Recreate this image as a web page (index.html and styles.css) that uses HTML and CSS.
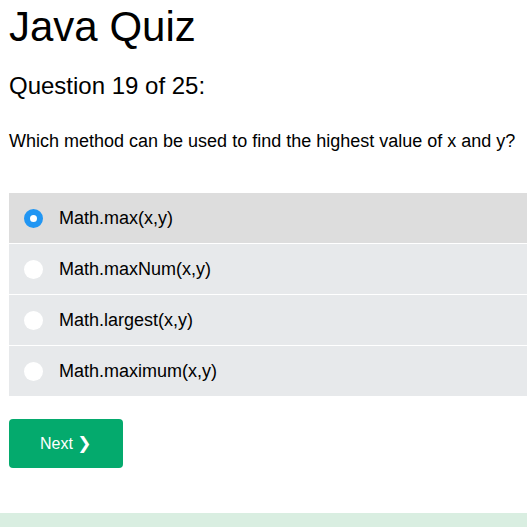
FILE: index.html
```html
<!DOCTYPE html>
<html lang="en">
<head>
<meta charset="utf-8">
<title>Java Quiz</title>
<link rel="stylesheet" href="styles.css">
</head>
<body>
<main class="quiz">
  <h1 class="quiz-title">Java Quiz</h1>
  <h3 class="quiz-counter">Question 19 of 25:</h3>
  <p class="quiz-question">Which method can be used to find the highest value of x and y?</p>
  <form class="options">
    <label class="option option-selected"><input type="radio" name="a" class="radio" checked><span>Math.max(x,y)</span></label>
    <label class="option"><input type="radio" name="a" class="radio"><span>Math.maxNum(x,y)</span></label>
    <label class="option"><input type="radio" name="a" class="radio"><span>Math.largest(x,y)</span></label>
    <label class="option"><input type="radio" name="a" class="radio"><span>Math.maximum(x,y)</span></label>
  </form>
  <button class="next-btn" type="button">Next <span class="chev">&#10095;</span></button>
</main>
<footer class="band"></footer>
</body>
</html>
```
FILE: styles.css
```css
html, body {
  margin: 0;
  padding: 0;
  background: #fff;
}
body {
  font-family: "Liberation Sans", Arial, sans-serif;
  color: #000;
  width: 527px;
  height: 527px;
  overflow: hidden;
  display: flex;
  flex-direction: column;
}
.quiz {
  padding: 3px 0 0 9px;
  flex: 1;
}
.quiz-title {
  margin: 0;
  font-size: 42px;
  line-height: 48px;
  font-weight: normal;
}
.quiz-counter {
  margin: 21px 0 0;
  font-size: 24px;
  line-height: 28px;
  font-weight: normal;
}
.quiz-question {
  margin: 31px 0 0;
  font-size: 18px;
  line-height: 21px;
}
.options {
  margin: 41px 0 0;
  display: flex;
  flex-direction: column;
}
.option {
  display: flex;
  align-items: center;
  gap: 16px;
  height: 51px;
  box-sizing: border-box;
  padding: 0 0 0 15px;
  border-bottom: 1px solid #fff;
  background: #e7e9eb;
  font-size: 18px;
  line-height: 21px;
}
.option-selected {
  background: #dddddd;
}
.radio {
  appearance: none;
  -webkit-appearance: none;
  margin: 0;
  width: 19px;
  height: 19px;
  border-radius: 50%;
  background: #fff;
  flex: none;
}
.radio:checked {
  background: #fff;
  border: 6px solid #2196f3;
  box-sizing: border-box;
}
.next-btn {
  margin: 22px 0 0;
  display: block;
  border: none;
  border-radius: 4px;
  background: #04aa6d;
  color: #fff;
  font-family: "Liberation Sans", Arial, sans-serif;
  font-size: 16px;
  line-height: 19px;
  padding: 15px 31px;
}
.chev {
  font-family: "DejaVu Sans", sans-serif;
  font-weight: bold;
  font-size: 17px;
}
.band {
  height: 14px;
  background: #d9eee1;
  flex: none;
}
```
